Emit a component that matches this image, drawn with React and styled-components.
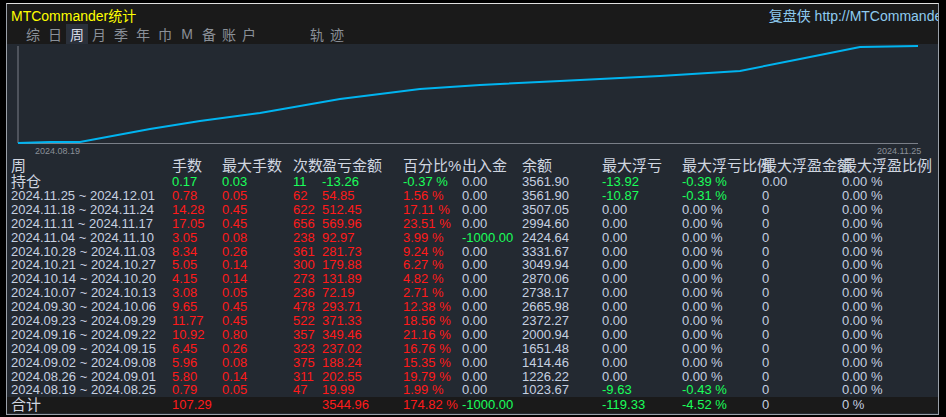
import React from 'react';
import styled, {createGlobalStyle} from 'styled-components';

const Global = createGlobalStyle`
    body { margin: 0; background: #000; font-family: "Liberation Sans", "Noto Sans CJK SC", sans-serif; }
`;

const Page = styled.div`
    width: 946px;
    height: 417px;
    display: flex;
    padding: 3px 0 0 6px;
    box-sizing: border-box;
    overflow: hidden;
`;

const Panel = styled.div`
    width: 931px;
    height: 410px;
    border: 1px solid #9aa0a8;
    border-top-color: #e0e0e0;
    background: #232931;
    display: flex;
    flex-direction: column;
    overflow: hidden;
`;

const Header = styled.div`
    background: #1a1a1a;
    height: 39px;
    display: flex;
    flex-direction: column;
    padding: 1px 0 0 4px;
`;

const TitleRow = styled.div`
    display: flex;
    justify-content: space-between;
    font-size: 14px;
    height: 18px;
`;

const Title = styled.span`color: #ffff00;`;
const Link = styled.span`color: #8ecbf0; white-space: nowrap; margin-right: -12px;`;

const Tabs = styled.div`
    display: flex;
    font-size: 14px;
    padding-left: 11px;
    margin-top: 2px;
    height: 17px;
    align-items: center;
`;

const Tab = styled.span`
    width: ${p => p.$w || 22}px;
    text-align: center;
    margin-right: ${p => p.$gap || 0}px;
    background: ${p => p.$active ? '#2a303a' : 'transparent'};
    color: ${p => p.$active ? '#d8dde8' : '#8a9098'};
    letter-spacing: ${p => p.$spread ? 6 : 0}px;
`;

const Chart = styled.div`
    height: 114px;
    flex-shrink: 0;
`;

const Table = styled.div`
    display: flex;
    flex-direction: column;
    font-size: 13px;
    line-height: 13.9px;
`;

const Row = styled.div`
    display: grid;
    grid-template-columns: 161px 50px 71px 29px 81px 59px 60px 80px 80px 80px 80px 1fr;
    padding-left: 4px;
    white-space: nowrap;
    background: ${p => p.$total ? '#1a1a1a' : 'transparent'};
    height: ${p => p.$h || 13.9}px;
    line-height: ${p => p.$h || 13.9}px;
`;

const Cell = styled.span`
    color: ${p => ({r: '#ff1a1a', g: '#1aff5a', h: '#d0d6e0'}[p.$c] || '#c6d0e0')};
    font-size: ${p => p.$big ? 15 : 13}px;
    align-self: end;
`;

const heads = ['周', '手数', '最大手数', '次数', '盈亏金额', '百分比%', '出入金', '余额', '最大浮亏', '最大浮亏比例', '最大浮盈金额', '最大浮盈比例'];

const rows = [
    ['2024.11.25 ~ 2024.12.01', '0.78', '0.05', '62', '54.85', '1.56 %', '0.00', '3561.90', '-10.87', '-0.31 %', '0', '0.00 %'],
    ['2024.11.18 ~ 2024.11.24', '14.28', '0.45', '622', '512.45', '17.11 %', '0.00', '3507.05', '0.00', '0.00 %', '0', '0.00 %'],
    ['2024.11.11 ~ 2024.11.17', '17.05', '0.45', '656', '569.96', '23.51 %', '0.00', '2994.60', '0.00', '0.00 %', '0', '0.00 %'],
    ['2024.11.04 ~ 2024.11.10', '3.05', '0.08', '238', '92.97', '3.99 %', '-1000.00', '2424.64', '0.00', '0.00 %', '0', '0.00 %'],
    ['2024.10.28 ~ 2024.11.03', '8.34', '0.26', '361', '281.73', '9.24 %', '0.00', '3331.67', '0.00', '0.00 %', '0', '0.00 %'],
    ['2024.10.21 ~ 2024.10.27', '5.05', '0.14', '300', '179.88', '6.27 %', '0.00', '3049.94', '0.00', '0.00 %', '0', '0.00 %'],
    ['2024.10.14 ~ 2024.10.20', '4.15', '0.14', '273', '131.89', '4.82 %', '0.00', '2870.06', '0.00', '0.00 %', '0', '0.00 %'],
    ['2024.10.07 ~ 2024.10.13', '3.08', '0.05', '236', '72.19', '2.71 %', '0.00', '2738.17', '0.00', '0.00 %', '0', '0.00 %'],
    ['2024.09.30 ~ 2024.10.06', '9.65', '0.45', '478', '293.71', '12.38 %', '0.00', '2665.98', '0.00', '0.00 %', '0', '0.00 %'],
    ['2024.09.23 ~ 2024.09.29', '11.77', '0.45', '522', '371.33', '18.56 %', '0.00', '2372.27', '0.00', '0.00 %', '0', '0.00 %'],
    ['2024.09.16 ~ 2024.09.22', '10.92', '0.80', '357', '349.46', '21.16 %', '0.00', '2000.94', '0.00', '0.00 %', '0', '0.00 %'],
    ['2024.09.09 ~ 2024.09.15', '6.45', '0.26', '323', '237.02', '16.76 %', '0.00', '1651.48', '0.00', '0.00 %', '0', '0.00 %'],
    ['2024.09.02 ~ 2024.09.08', '5.96', '0.08', '375', '188.24', '15.35 %', '0.00', '1414.46', '0.00', '0.00 %', '0', '0.00 %'],
    ['2024.08.26 ~ 2024.09.01', '5.80', '0.14', '311', '202.55', '19.79 %', '0.00', '1226.22', '0.00', '0.00 %', '0', '0.00 %'],
    ['2024.08.19 ~ 2024.08.25', '0.79', '0.05', '47', '19.99', '1.99 %', '0.00', '1023.67', '-9.63', '-0.43 %', '0', '0.00 %'],
];

const colorFor = (i, v) => {
    if ([1, 2, 3, 4, 5].includes(i)) return 'r';
    if ((i === 8 || i === 9 || i === 6) && v.startsWith('-')) return 'g';
    return '';
};

const pts = [[0, 99], [32, 98], [62, 98], [132, 85], [182, 77], [242, 69], [322, 55], [402, 45], [462, 41], [542, 37], [642, 32], [722, 27], [782, 15], [842, 3], [900, 2]];

const App = () => (
    <Page>
        <Global/>
        <Panel>
            <Header>
                <TitleRow>
                    <Title>MTCommander统计</Title>
                    <Link>复盘侠 http://MTCommander.</Link>
                </TitleRow>
                <Tabs>
                    {['综', '日'].map(t => <Tab key={t}>{t}</Tab>)}
                    <Tab $active>周</Tab>
                    {['月', '季', '年', '巾', 'M', '备'].map(t => <Tab key={t}>{t}</Tab>)}
                    <Tab $w={44} $spread $gap={44}>账户</Tab>
                    <Tab $w={44} $spread>轨迹</Tab>
                </Tabs>
            </Header>
            <Chart>
                <svg width="931" height="114">
                    <line x1="11" y1="2" x2="11" y2="99" stroke="#7a7f88"/>
                    <line x1="11" y1="99.5" x2="911" y2="99.5" stroke="#7a7f88"/>
                    <polyline points={pts.map(([x, y]) => `${x + 11},${y}`).join(' ')} fill="none" stroke="#00b4f0" strokeWidth="2"/>
                    <text x="28" y="110" fill="#8a9098" fontSize="9" fontFamily="Liberation Sans">2024.08.19</text>
                    <text x="870" y="110" fill="#8a9098" fontSize="9" fontFamily="Liberation Sans">2024.11.25</text>
                </svg>
            </Chart>
            <Table>
                <Row $h={16}>
                    {heads.map((h, i) => <Cell key={i} $c="h" $big>{h}</Cell>)}
                </Row>
                <Row $h={15}>
                    <Cell $c="h" $big>持仓</Cell>
                    <Cell $c="g">0.17</Cell><Cell $c="g">0.03</Cell><Cell $c="g">11</Cell>
                    <Cell $c="g">-13.26</Cell><Cell $c="g">-0.37 %</Cell><Cell>0.00</Cell>
                    <Cell>3561.90</Cell><Cell $c="g">-13.92</Cell><Cell $c="g">-0.39 %</Cell>
                    <Cell>0.00</Cell><Cell>0.00 %</Cell>
                </Row>
                {rows.map(r => (
                    <Row key={r[0]}>
                        {r.map((v, i) => <Cell key={i} $c={colorFor(i, v)}>{v}</Cell>)}
                    </Row>
                ))}
                <Row $total $h={16}>
                    <Cell $c="h" $big>合计</Cell>
                    <Cell $c="r">107.29</Cell><Cell/><Cell/>
                    <Cell $c="r">3544.96</Cell><Cell $c="r">174.82 %</Cell><Cell $c="g">-1000.00</Cell>
                    <Cell/><Cell $c="g">-119.33</Cell><Cell $c="g">-4.52 %</Cell>
                    <Cell>0</Cell><Cell>0 %</Cell>
                </Row>
            </Table>
        </Panel>
    </Page>
);

export default App;
